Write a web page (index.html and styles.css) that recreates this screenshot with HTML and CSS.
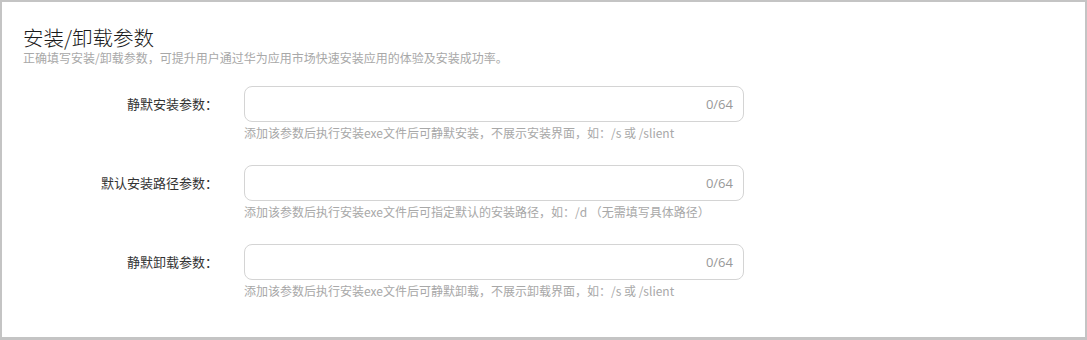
FILE: index.html
```html
<!DOCTYPE html>
<html lang="zh-CN">
<head>
<meta charset="utf-8">
<title>安装/卸载参数</title>
<link rel="stylesheet" href="styles.css">
</head>
<body>
<div class="frame">
  <div class="header">
    <div class="title">安装/卸载参数</div>
    <div class="subtitle">正确填写安装/卸载参数，可提升用户通过华为应用市场快速安装应用的体验及安装成功率。</div>
  </div>
  <div class="form">
    <div class="row">
      <div class="label">静默安装参数：</div>
      <div class="field">
        <div class="input"><span class="count">0/64</span></div>
        <div class="hint">添加该参数后执行安装exe文件后可静默安装，不展示安装界面，如：/s 或 /slient</div>
      </div>
    </div>
    <div class="row">
      <div class="label">默认安装路径参数：</div>
      <div class="field">
        <div class="input"><span class="count">0/64</span></div>
        <div class="hint">添加该参数后执行安装exe文件后可指定默认的安装路径，如：/d （无需填写具体路径）</div>
      </div>
    </div>
    <div class="row">
      <div class="label">静默卸载参数：</div>
      <div class="field">
        <div class="input"><span class="count">0/64</span></div>
        <div class="hint">添加该参数后执行安装exe文件后可静默卸载，不展示卸载界面，如：/s 或 /slient</div>
      </div>
    </div>
  </div>
</div>
</body>
</html>
```
FILE: styles.css
```css
html, body {
  margin: 0;
  padding: 0;
  background: #ffffff;
}
body {
  font-family: "Noto Sans CJK SC", "Noto Sans", sans-serif;
  color: #333;
}
.frame {
  box-sizing: border-box;
  width: 1087px;
  height: 340px;
  border: 2px solid #c4c4c4;
  border-bottom-width: 3px;
  background: #fff;
  overflow: hidden;
}
.header {
  padding: 22px 0 0 21px;
}
.title {
  font-size: 20.5px;
  line-height: 27px;
  color: #1a1a1a;
  font-weight: 300;
}
.subtitle {
  font-size: 12px;
  line-height: 14px;
  color: #a8a8a8;
}
.form {
  margin-top: 21px;
  display: flex;
  flex-direction: column;
  gap: 23px;
}
.row {
  display: flex;
  align-items: flex-start;
}
.label {
  width: 216px;
  height: 36px;
  line-height: 36px;
  text-align: right;
  font-size: 13px;
  color: #333;
  flex: none;
}
.field {
  margin-left: 26px;
  width: 500px;
}
.input {
  box-sizing: border-box;
  height: 36px;
  border: 1px solid #d4d4d4;
  border-radius: 8px;
  display: flex;
  align-items: center;
  justify-content: flex-end;
  padding-right: 10px;
}
.count {
  font-size: 13px;
  color: #999;
  font-family: "Open Sans", "Noto Sans", sans-serif;
}
.hint {
  margin-top: 2px;
  font-size: 12px;
  line-height: 18px;
  color: #a8a8a8;
  white-space: nowrap;
}
```
